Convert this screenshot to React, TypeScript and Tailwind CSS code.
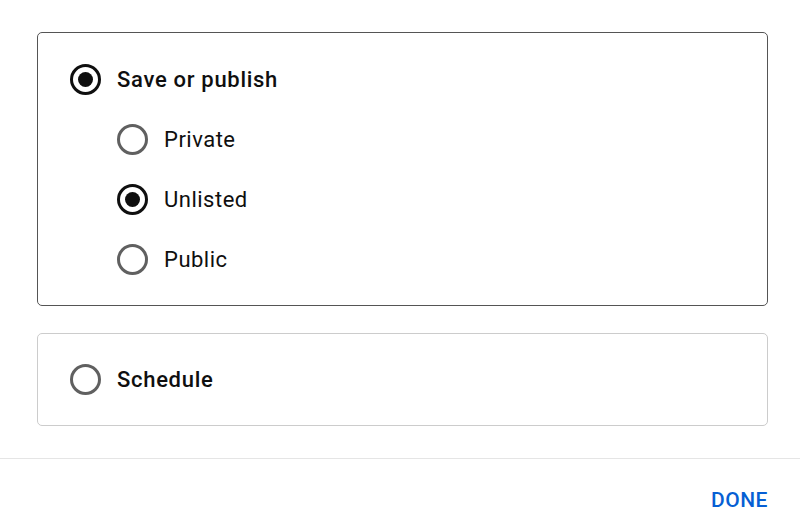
import React from "react";

function Radio({ checked }: { checked?: boolean }) {
  return (
    <span
      className={
        "flex h-[31px] w-[31px] shrink-0 items-center justify-center rounded-full border-[3px] " +
        (checked ? "border-[#0f0f0f]" : "border-[#606060]")
      }
    >
      {checked && <span className="h-[15px] w-[15px] rounded-full bg-[#0f0f0f]" />}
    </span>
  );
}

export default function App() {
  return (
    <div
      className="flex h-[530px] w-[800px] flex-col bg-white text-[#0f0f0f]"
      style={{ fontFamily: "Roboto, 'Liberation Sans', sans-serif" }}
    >
      <div className="pl-[37px] pr-[32px] pt-[32px]">
        <div className="rounded-[5px] border-[1.5px] border-[#555555] pl-[32px] pt-[31px] pb-[30px]">
          <div className="flex h-[31px] items-center gap-[16px]">
            <Radio checked />
            <span className="text-[22px] font-medium leading-none tracking-[0.7px]">Save or publish</span>
          </div>
          <div className="ml-[47px] mt-[29px] flex flex-col gap-[29px]">
            <div className="flex h-[31px] items-center gap-[16px]">
              <Radio />
              <span className="text-[22px] leading-none tracking-[0.5px]">Private</span>
            </div>
            <div className="flex h-[31px] items-center gap-[16px]">
              <Radio checked />
              <span className="text-[22px] leading-none tracking-[0.5px]">Unlisted</span>
            </div>
            <div className="flex h-[31px] items-center gap-[16px]">
              <Radio />
              <span className="text-[22px] leading-none tracking-[0.5px]">Public</span>
            </div>
          </div>
        </div>
        <div className="mt-[27px] flex h-[93px] items-center gap-[16px] rounded-[5px] border-[1.5px] border-[#cccccc] pl-[32px]">
          <Radio />
          <span className="text-[22px] font-medium leading-none tracking-[0.7px]">Schedule</span>
        </div>
      </div>
      <div className="mt-[32px] h-px w-full bg-[#e5e5e5]" />
      <div className="flex justify-end pr-[32px] pt-[31px]">
        <span className="text-[21px] font-medium leading-none tracking-[0.5px] text-[#065fd4]">DONE</span>
      </div>
    </div>
  );
}
